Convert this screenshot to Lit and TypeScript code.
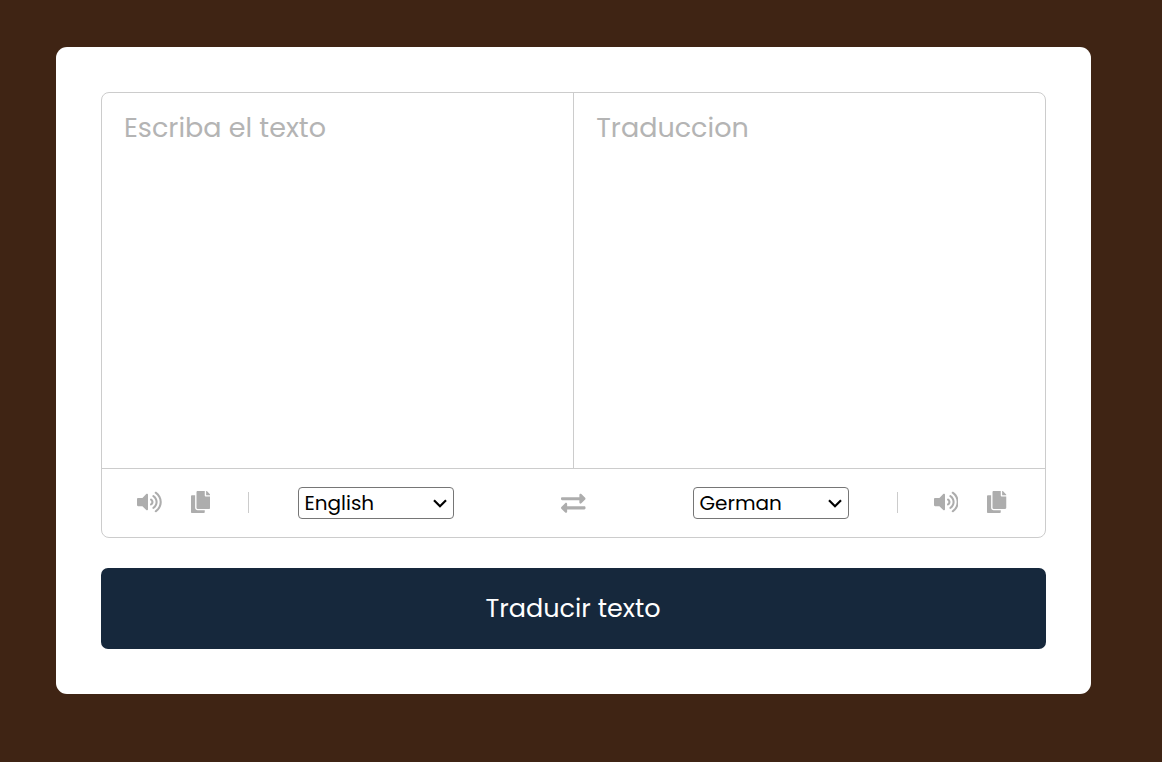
import { LitElement, html, css, svg } from "lit";
import { customElement, property } from "lit/decorators.js";

const ICONS = {
  volume: {
    box: "0 0 576 512",
    d: "M215.03 71.05L126.06 160H24c-13.26 0-24 10.74-24 24v144c0 13.25 10.74 24 24 24h102.06l88.97 88.95c15.03 15.03 40.97 4.47 40.97-16.97V88.02c0-21.46-25.96-31.98-40.97-16.97zm233.32-51.08c-11.17-7.33-26.18-4.24-33.51 6.95-7.34 11.17-4.22 26.18 6.95 33.51 66.27 43.49 105.82 116.6 105.82 195.58 0 78.98-39.55 152.09-105.82 195.58-11.17 7.32-14.29 22.34-6.95 33.5 7.04 10.71 21.93 14.56 33.51 6.95C528.27 439.58 576 351.33 576 256S528.27 72.43 448.35 19.97zM480 256c0-63.53-32.06-121.94-85.77-156.24-11.19-7.14-26.03-3.82-33.12 7.46s-3.78 26.21 7.41 33.36C408.27 165.97 432 209.11 432 256s-23.73 90.02-63.48 115.42c-11.19 7.14-14.5 22.07-7.41 33.36 6.51 10.36 21.12 15.14 33.12 7.46C447.94 377.94 480 319.54 480 256zm-141.77-76.87c-11.58-6.33-26.19-2.16-32.61 9.45-6.39 11.61-2.16 26.2 9.45 32.61C327.98 228.28 336 241.63 336 256c0 14.38-8.02 27.72-20.92 34.81-11.61 6.41-15.84 21-9.45 32.61 6.43 11.66 21.05 15.8 32.61 9.45 28.23-15.55 45.77-45 45.77-76.88s-17.54-61.32-45.78-76.86z",
  },
  copy: {
    box: "0 0 448 512",
    d: "M320 448v40c0 13.255-10.745 24-24 24H24c-13.255 0-24-10.745-24-24V120c0-13.255 10.745-24 24-24h72v296c0 30.879 25.121 56 56 56h168zm0-344V0H152c-13.255 0-24 10.745-24 24v368c0 13.255 10.745 24 24 24h272c13.255 0 24-10.745 24-24V128H344c-13.2 0-24-10.8-24-24zm120.971-31.029L375.029 7.029A24 24 0 0 0 358.059 0H352v96h96v-6.059a24 24 0 0 0-7.029-16.97z",
  },
  exchange: {
    box: "0 0 512 512",
    d: "M0 168v-16c0-13.255 10.745-24 24-24h360V80c0-21.367 25.899-32.042 40.971-16.971l80 80c9.372 9.373 9.372 24.569 0 33.941l-80 80C409.956 271.982 384 261.456 384 240v-48H24c-13.255 0-24-10.745-24-24zm488 152H128v-48c0-21.314-25.862-32.08-40.971-16.971l-80 80c-9.372 9.373-9.372 24.569 0 33.941l80 80C102.057 463.997 128 453.437 128 432v-48h360c13.255 0 24-10.745 24-24v-16c0-13.255-10.745-24-24-24z",
  },
};

const icon = (name: keyof typeof ICONS) => html`
  <svg class="icon ${name}" viewBox=${ICONS[name].box} aria-hidden="true">
    ${svg`<path d=${ICONS[name].d}></path>`}
  </svg>
`;

@customElement("language-select")
class LanguageSelect extends LitElement {
  @property() value = "";

  static styles = css`
    :host {
      display: flex;
      box-sizing: border-box;
      width: 156px;
      height: 32px;
      padding: 0 6px 0 5px;
      align-items: center;
      justify-content: space-between;
      border: 1px solid #767676;
      border-radius: 4px;
      background: #fff;
      color: #000;
      font-size: 20px;
      line-height: 30px;
    }
    .name {
      padding-left: 1px;
    }
    .chevron {
      width: 14px;
      height: 9px;
      fill: none;
      stroke: #000;
      stroke-width: 2.2;
    }
  `;

  render() {
    return html`
      <span class="name">${this.value}</span>
      <svg class="chevron" viewBox="0 0 14 9"><path d="M1 1.3 7 7.2 13 1.3" /></svg>
    `;
  }
}

@customElement("app-root")
class AppRoot extends LitElement {
  static styles = css`
    :host {
      display: block;
      box-sizing: border-box;
      height: 762px;
      padding: 47px 71px 68px 56px;
      background: #3f2414;
      font-family: Poppins, Inter, sans-serif;
    }
    .card {
      box-sizing: border-box;
      height: 647px;
      padding: 45px;
      border-radius: 11px;
      background: #fff;
    }
    .translator {
      box-sizing: border-box;
      height: 446px;
      border: 1px solid #ccc;
      border-radius: 8px;
    }
    .texts {
      display: flex;
      height: 375px;
      border-bottom: 1px solid #ccc;
    }
    .text {
      box-sizing: border-box;
      flex: 1;
      padding: 14px 22px;
      color: #b4b4b4;
      font-size: 27px;
      line-height: 41px;
    }
    .text + .text {
      padding-left: 22.5px;
      border-left: 1px solid #ccc;
    }
    .controls {
      display: flex;
      height: 68px;
      padding: 0 35px;
      align-items: center;
      justify-content: space-between;
    }
    .side {
      display: flex;
      align-items: center;
    }
    .tools {
      display: flex;
      align-items: center;
      gap: 29px;
      padding-bottom: 2px;
    }
    .rule {
      width: 1px;
      height: 21px;
      margin: 0 49px 1px 37.5px;
      background: #ccc;
    }
    .side.end .rule {
      margin: 0 36px 1px 48px;
    }
    .side.end .tools {
      margin-right: 3.5px;
    }
    .icon {
      display: block;
      fill: #adadad;
    }
    .volume {
      width: 24.75px;
      height: 22px;
    }
    .copy {
      width: 19.25px;
      height: 22px;
    }
    .exchange {
      width: 24.5px;
      height: 24.5px;
      margin: 0.5px 0 0 0.5px;
    }
    .submit {
      display: block;
      width: 100%;
      height: 81px;
      margin-top: 30px;
      padding: 0 1px 0 0;
      border: 0;
      border-radius: 7px;
      background: #16283c;
      color: #fff;
      font: inherit;
      font-size: 25.5px;
    }
  `;

  render() {
    return html`
      <main class="card">
        <section class="translator">
          <div class="texts">
            <div class="text">Escriba el texto</div>
            <div class="text">Traduccion</div>
          </div>
          <div class="controls">
            <div class="side">
              <div class="tools">${icon("volume")}${icon("copy")}</div>
              <div class="rule"></div>
              <language-select value="English"></language-select>
            </div>
            ${icon("exchange")}
            <div class="side end">
              <language-select value="German"></language-select>
              <div class="rule"></div>
              <div class="tools">${icon("volume")}${icon("copy")}</div>
            </div>
          </div>
        </section>
        <button class="submit">Traducir texto</button>
      </main>
    `;
  }
}
